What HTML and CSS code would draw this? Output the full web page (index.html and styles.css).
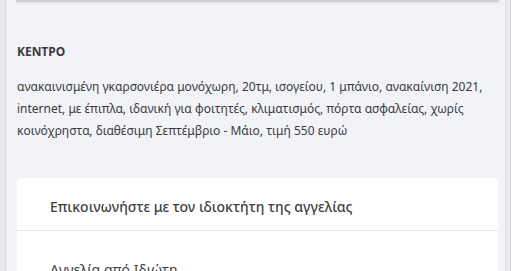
FILE: index.html
```html
<!DOCTYPE html>
<html lang="el">
<head>
  <meta charset="UTF-8">
  <meta name="viewport" content="width=device-width, initial-scale=1.0">
  <title>Αγγελία</title>
  <link rel="stylesheet" href="styles.css">
</head>
<body>
  <div class="page">
    <div class="panel">
      <div class="top-bar"></div>
      <div class="details">
        <h3 class="area">ΚΕΝΤΡΟ</h3>
        <p class="description">ανακαινισμένη γκαρσονιέρα μονόχωρη, 20τμ, ισογείου, 1 μπάνιο, ανακαίνιση 2021, internet, με έπιπλα, ιδανική για φοιτητές, κλιματισμός, πόρτα ασφαλείας, χωρίς κοινόχρηστα, διαθέσιμη Σεπτέμβριο - Μάιο, τιμή 550 ευρώ</p>
      </div>
      <div class="contact-card">
        <div class="contact-header">Επικοινωνήστε με τον ιδιοκτήτη της αγγελίας</div>
        <div class="contact-body">
          <div class="owner">Αγγελία από Ιδιώτη</div>
        </div>
      </div>
    </div>
    <div class="side-strip"></div>
  </div>
</body>
</html>
```

FILE: styles.css
```css
body {
  margin: 0;
  padding: 0;
  background-color: #e8e8f0;
  font-family: "Noto Sans", "Open Sans", sans-serif;
  color: #3b3b3b;
  overflow: hidden;
}
.page {
  display: flex;
  height: 271px;
  padding-left: 5px;
}
.panel {
  width: 481px;
  flex-shrink: 0;
  background: #f2f3f8;
  border-left: 1px solid #dadae2;
  border-right: 1px solid #dadae2;
  padding: 0 7px 0 11px;
}
.side-strip {
  flex: 1;
  border-right: 1px solid #d6d6de;
}
.top-bar {
  height: 2px;
  background: #cdcdd6;
  margin: 0 -1px;
  box-shadow: 0 1px 2px rgba(0, 0, 0, 0.08);
}
.details {
  padding-top: 40px;
}
.area {
  margin: 0;
  font-size: 12px;
  font-weight: bold;
  color: #3b3b3b;
  line-height: 20px;
}
.description {
  margin: 14px 0 0;
  font-size: 12px;
  line-height: 22px;
  color: #3b3b3b;
}
.contact-card {
  margin-top: 36px;
  background: #ffffff;
  border-radius: 4px 4px 0 0;
}
.contact-header {
  height: 52px;
  line-height: 58px;
  padding-left: 33px;
  font-size: 14px;
  font-weight: 500;
  color: #3f3f3f;
  border-bottom: 1px solid #e4e4ea;
}
.contact-body {
  padding: 29px 0 0 33px;
}
.owner {
  font-size: 14px;
  color: #3f3f3f;
}
```
